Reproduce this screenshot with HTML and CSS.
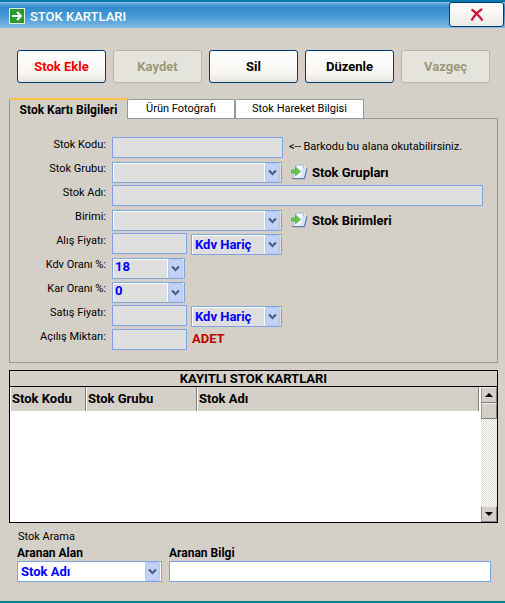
FILE: index.html
```html
<!DOCTYPE html>
<html lang="tr">
<head>
<meta charset="utf-8">
<title>Stok Kartları</title>
<link rel="stylesheet" href="styles.css">
</head>
<body>
<svg class="defs" aria-hidden="true">
  <symbol id="chevron" viewBox="0 0 16 19">
    <rect x="0" y="0" width="15" height="19" rx="2" fill="#c3d3f5"/>
    <rect x="0.5" y="0.5" width="14" height="18" rx="1.5" fill="none" stroke="#b3c8f0"/>
    <path d="M4 7.500 L7.500 11 L11 7.500" fill="none" stroke="#4a5f85" stroke-width="2.200"/>
  </symbol>
  <symbol id="page" viewBox="0 0 17 16">
    <path d="M5 1 H12.500 L16 4 L13.500 14.500 H1.500 Z" fill="#d4e5f8" stroke="#a9bcd6"/>
    <path d="M6 2 H12 L10 13 H3 Z" fill="#f2f8ff"/>
    <path d="M12.500 1 V4 H16" fill="#fff" stroke="#a9bcd6"/>
    <path d="M1 14.700 H13.500 L16 4.500" fill="none" stroke="#6780aa" stroke-width="1.200"/>
    <path d="M0.500 6 H4.500 V3 L9.500 7.500 L4.500 12 V9 H0.500 Z" fill="#6cc94f" stroke="#4aa63a" stroke-width="0.700"/>
  </symbol>
</svg>
<header class="titlebar">
  <svg class="app-icon" viewBox="0 0 16 16" aria-hidden="true">
    <rect width="16" height="16" fill="#e6f3e2"/>
    <rect x="1" y="1" width="14" height="14" fill="#2b9a2e"/>
    <path d="M3 8 H12 M8 4 L12 8 L8 12" fill="none" stroke="#fff" stroke-width="2"/>
  </svg>
  <h1>STOK KARTLARI</h1>
  <button class="close" type="button" aria-label="Kapat">
    <svg viewBox="0 0 14 14" aria-hidden="true"><path d="M1.500 1.500 Q7 5 12.500 12.500 M12 1 Q5 6 1.500 12.500" fill="none" stroke="#d0163c" stroke-width="2.200"/></svg>
  </button>
</header>
<main>
  <div class="toolbar">
    <button class="cmd add" type="button">Stok Ekle</button>
    <button class="cmd" type="button" disabled>Kaydet</button>
    <button class="cmd" type="button">Sil</button>
    <button class="cmd" type="button">Düzenle</button>
    <button class="cmd" type="button" disabled>Vazgeç</button>
  </div>

  <div class="tabs" role="tablist">
    <button class="tab active" type="button" role="tab" aria-selected="true">Stok Kartı Bilgileri</button>
    <button class="tab photo" type="button" role="tab" aria-selected="false">Ürün Fotoğrafı</button>
    <button class="tab moves" type="button" role="tab" aria-selected="false">Stok Hareket Bilgisi</button>
  </div>
  <form class="panel">
    <div class="row">
      <label for="kod">Stok Kodu:</label>
      <input class="field code" id="kod" type="text">
      <span class="hint">&lt;-- Barkodu bu alana okutabilirsiniz.</span>
    </div>
    <div class="row">
      <label for="grup">Stok Grubu:</label>
      <span class="combo wide"><select id="grup"><option></option></select><svg aria-hidden="true"><use href="#chevron"/></svg></span>
      <a class="link" href="#"><svg aria-hidden="true"><use href="#page"/></svg>Stok Grupları</a>
    </div>
    <div class="row">
      <label for="ad">Stok Adı:</label>
      <input class="field full" id="ad" type="text">
    </div>
    <div class="row">
      <label for="birim">Birimi:</label>
      <span class="combo wide"><select id="birim"><option></option></select><svg aria-hidden="true"><use href="#chevron"/></svg></span>
      <a class="link" href="#"><svg aria-hidden="true"><use href="#page"/></svg>Stok Birimleri</a>
    </div>
    <div class="row">
      <label for="alis">Alış Fiyatı:</label>
      <input class="field price" id="alis" type="text">
      <span class="combo tax"><select aria-label="Alış KDV"><option>Kdv Hariç</option></select><svg aria-hidden="true"><use href="#chevron"/></svg></span>
    </div>
    <div class="row">
      <label for="kdv">Kdv Oranı %:</label>
      <span class="combo rate"><select id="kdv"><option>18</option></select><svg aria-hidden="true"><use href="#chevron"/></svg></span>
    </div>
    <div class="row">
      <label for="kar">Kar Oranı %:</label>
      <span class="combo rate"><select id="kar"><option>0</option></select><svg aria-hidden="true"><use href="#chevron"/></svg></span>
    </div>
    <div class="row">
      <label for="satis">Satış Fiyatı:</label>
      <input class="field price" id="satis" type="text">
      <span class="combo tax"><select aria-label="Satış KDV"><option>Kdv Hariç</option></select><svg aria-hidden="true"><use href="#chevron"/></svg></span>
    </div>
    <div class="row">
      <label for="miktar">Açılış Miktarı:</label>
      <input class="field price" id="miktar" type="text">
      <span class="unit">ADET</span>
    </div>
  </form>

  <section class="records">
    <h2 id="records-title">KAYITLI STOK KARTLARI</h2>
    <div class="grid-area">
      <div class="table-wrap">
        <table aria-labelledby="records-title">
          <thead><tr><th class="c-code">Stok Kodu</th><th class="c-group">Stok Grubu</th><th>Stok Adı</th></tr></thead>
          <tbody></tbody>
        </table>
      </div>
      <div class="scrollbar">
        <button type="button" aria-label="Yukarı"><svg viewBox="0 0 8 4" aria-hidden="true"><path d="M0 4 L4 0 L8 4 Z"/></svg></button>
        <div class="thumb"></div>
        <button class="down" type="button" aria-label="Aşağı"><svg viewBox="0 0 8 4" aria-hidden="true"><path d="M0 0 H8 L4 4 Z"/></svg></button>
      </div>
    </div>
  </section>

  <form class="search">
    <p>Stok Arama</p>
    <div class="search-row">
      <div class="search-area">
        <label for="alan">Aranan Alan</label>
        <span class="combo white"><select id="alan"><option>Stok Adı</option></select><svg aria-hidden="true"><use href="#chevron"/></svg></span>
      </div>
      <div class="search-text">
        <label for="bilgi">Aranan Bilgi</label>
        <input class="field white" id="bilgi" type="text">
      </div>
    </div>
  </form>
</main>
</body>
</html>
```
FILE: styles.css
```css
* { box-sizing: border-box; }

body {
  margin: 0;
  min-height: 100vh;
  display: flex;
  flex-direction: column;
  background: #d4d0c8;
  border-bottom: 2px solid #087f91;
  font: 11px/16px Roboto, "Liberation Sans", sans-serif;
  color: #000;
}

h1, h2, p { margin: 0; }
button, input, select { font: inherit; margin: 0; }
.defs { position: absolute; width: 0; height: 0; }

.titlebar {
  display: flex;
  align-items: center;
  height: 28px;
  padding: 0 1px 0 9px;
  border-top: 2px solid #0879ae;
  background: linear-gradient(#8fc0e8 0, #5fa5da 2px, #308bcb 5px, #3f94d0 12px, #6fb0e0 23px, #8bbde4 26px);
}
.app-icon { width: 16px; height: 16px; margin-top: 2px; }
h1 { margin: 3px auto 0 5px; color: #fff; font-weight: 500; font-size: 13px; }
.close {
  align-self: flex-start;
  width: 55px;
  height: 25px;
  padding: 0;
  border: 1px solid #003c74;
  border-radius: 3px;
  background: linear-gradient(#fff, #ecebe6);
}
.close svg { display: block; width: 14px; height: 14px; margin: 0 auto; }

main { flex: 1; display: flex; flex-direction: column; padding: 22px 7px 19px 9px; }

.toolbar { display: flex; gap: 7px; padding: 0 8px; }
.cmd {
  flex: 1;
  height: 33px;
  padding: 0;
  border: 1px solid #003c74;
  border-radius: 3px;
  background: linear-gradient(#fff, #f6f5f1 75%, #e6e3dc);
  font-weight: 700;
  font-size: 13px;
  color: #000;
}
.cmd.add { color: #f00; }
.cmd:disabled { border-color: #b9b5a0; background: #e5e4dc; color: #9a9a78; }

.tabs { display: flex; align-items: flex-end; margin-top: 15px; }
.tab {
  height: 19px;
  padding: 0;
  border: 1px solid #919b9c;
  border-bottom: 0;
  border-radius: 2px 2px 0 0;
  background: #fff;
}
.tab.active {
  position: relative;
  width: 119px;
  height: 21px;
  margin-bottom: -1px;
  border-top: 2px solid #ffc03c;
  background: #d4d0c8;
  font-weight: 700;
  font-size: 12px;
}
.tab.photo { width: 107px; border-left: 0; }
.tab.moves { width: 129px; }

.panel { height: 245px; padding: 18px 14px 0 0; border: 1px solid #919b9c; }
.row { display: flex; height: 24px; }
.row label { width: 96px; margin-right: 6px; text-align: right; }

.field, .combo { height: 21px; border: 1px solid #7f9fe6; background: #dfdfdf; }
.field { padding: 0 4px; color: #00f; font-weight: 700; outline: 0; }
.code { width: 171px; }
.full { flex: 1; min-width: 0; }
.price { width: 75px; }

.combo { display: flex; align-items: stretch; margin-top: 1px; border-color: #7fa5e0; box-shadow: inset 1px 1px #fff; }
.combo select {
  flex: 1;
  min-width: 0;
  padding: 0 0 0 3px;
  border: 0;
  outline: 0;
  appearance: none;
  background: none;
  color: #00f;
  font-weight: 700;
  font-size: 13px;
}
.combo svg { width: 17px; height: 19px; border-left: 1px solid #fff; }
.combo.wide { width: 170px; }
.combo.tax { width: 91px; margin-left: 4px; }
.combo.rate { width: 73px; }
.combo.rate select { padding: 0 0 4px 2px; }

.hint { margin: 2px 0 0 6px; }
.link { display: flex; align-items: center; gap: 4px; margin-left: 9px; height: 24px; color: #000; font-weight: 700; font-size: 13px; text-decoration: none; }
.link svg { width: 17px; height: 16px; margin-bottom: 2px; }
.unit { margin: 2px 0 0 5px; color: #c00000; font-weight: 700; font-size: 13px; }

.records { flex: 1; display: flex; flex-direction: column; margin-top: 7px; border: 1px solid #000; background: #fff; }
h2 { height: 16px; border-bottom: 1px solid #000; background: #d4d0c8; text-align: center; font-size: 13px; line-height: 15px; }
.grid-area { flex: 1; display: flex; }
.table-wrap { flex: 1; padding-right: 2px; }
table { width: 100%; border-collapse: separate; border-spacing: 0; table-layout: fixed; }
th { height: 24px; padding: 0 1px; border-right: 1px solid #808080; border-left: 1px solid #fff; background: #d4d0c8; text-align: left; font-size: 13px; }
.c-code { width: 76px; }
.c-group { width: 111px; }
.scrollbar { display: flex; flex-direction: column; width: 16px; background: repeating-conic-gradient(#fff 0 25%, #dedbd5 0 50%) 0 0 / 2px 2px; }
.scrollbar button, .thumb { width: 16px; height: 16px; padding: 0; border: 1px solid; border-color: #eee #808080 #808080 #999; background: #d4d0c8; }
.scrollbar svg { display: block; width: 8px; height: 4px; margin: 0 auto; }
.scrollbar .down { margin-top: auto; }

.search { padding: 6px 7px 0 8px; }
.search p { padding-left: 1px; }
.search-row { display: flex; gap: 7px; }
.search-area { width: 145px; }
.search-text { flex: 1; }
.search-row label { display: block; font-weight: 700; font-size: 12px; }
.search-row .field { display: block; width: 100%; }
.search-row .combo { margin: 0; }
.white { background: #fff; }
```
